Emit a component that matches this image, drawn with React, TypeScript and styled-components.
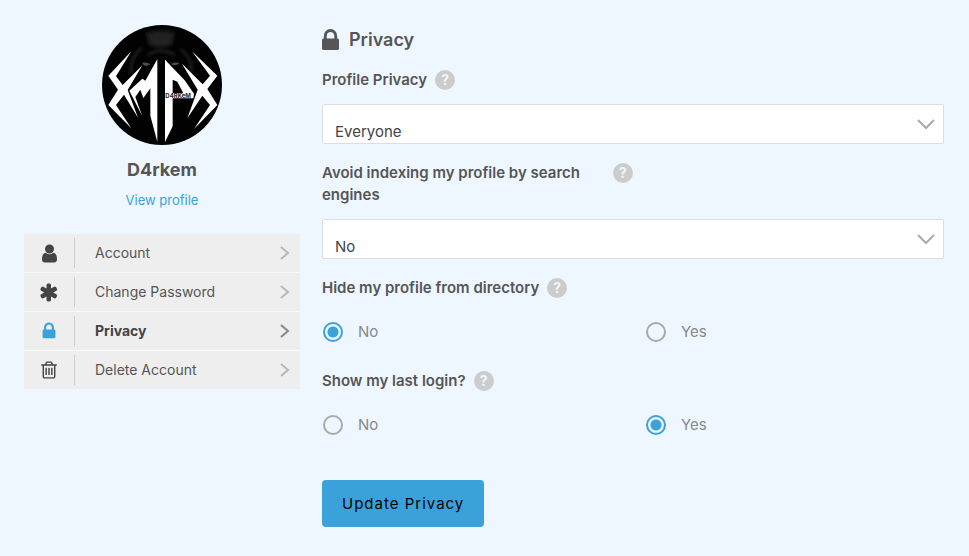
import React, { useState } from 'react';
import styled, { createGlobalStyle } from 'styled-components';

const GlobalStyle = createGlobalStyle`
  *, *::before, *::after { box-sizing: border-box; }
  body {
    margin: 0;
    background: #eef7ff;
    color: #555;
    font-family: Inter, "Liberation Sans", sans-serif;
    font-size: 15px;
    line-height: 22px;
  }
`;

const Page = styled.main`
  display: grid;
  grid-template-columns: 3fr 7fr;
  padding: 25px 25px 29px 24px;
`;

const Sidebar = styled.aside`
  display: flex;
  flex-direction: column;
`;

const ProfileCard = styled.div`
  display: flex;
  flex-direction: column;
  align-items: center;
  margin-bottom: 23px;
`;

const Avatar = styled.svg`
  width: 120px;
  height: 120px;
  border-radius: 50%;
`;

const UserName = styled.div`
  margin-top: 13px;
  font-size: 18px;
  line-height: 24px;
  font-weight: 700;
`;

const ProfileLink = styled.a`
  margin-top: 8px;
  font-size: 13px;
  line-height: 21px;
  color: #3ba1da;
  text-decoration: none;
`;

const Menu = styled.nav`
  display: flex;
  flex-direction: column;
  gap: 1px;
  background: #f4fafd;
`;

const MenuItem = styled.a<{ $active?: boolean }>`
  display: flex;
  align-items: center;
  height: 38px;
  padding-right: 10px;
  background: #eee;
  color: ${(p) => (p.$active ? '#444' : '#555')};
  font-size: 14px;
  font-weight: ${(p) => (p.$active ? 700 : 400)};
  text-decoration: none;
`;

const MenuIcon = styled.span<{ $active?: boolean }>`
  display: flex;
  align-items: center;
  justify-content: center;
  width: 51px;
  height: 30px;
  border-right: 1px solid #ccc;
  color: ${(p) => (p.$active ? '#3ba1da' : '#444')};
`;

const MenuText = styled.span`
  flex: 1;
  padding-left: 20px;
`;

const Arrow = styled.svg<{ $active?: boolean }>`
  width: 10px;
  height: 16px;
  fill: none;
  stroke: ${(p) => (p.$active ? '#888' : '#b8b8b8')};
  stroke-width: 2;
`;

const Glyph = styled.svg<{ $size: number }>`
  display: block;
  width: ${(p) => p.$size}px;
  height: ${(p) => p.$size}px;
  fill: currentColor;
`;

const Form = styled.form`
  display: flex;
  flex-direction: column;
  align-items: stretch;
  gap: 18px;
  padding: 3px 0 0 22px;
`;

const Heading = styled.h1`
  display: flex;
  align-items: center;
  gap: 10px;
  margin: 0;
  height: 23px;
  font-size: 18px;
  line-height: 24px;
  font-weight: 600;
`;

const HeadingIcon = styled.svg`
  width: 17px;
  height: 21px;
  fill: currentColor;
`;

const Field = styled.div`
  display: flex;
  flex-direction: column;
  gap: 13px;
`;

const LabelRow = styled.div`
  display: flex;
  align-items: flex-start;
  gap: 8px;
`;

const Label = styled.label`
  max-width: 283px;
  font-weight: 600;
`;

const HelpButton = styled.button`
  flex: none;
  width: 20px;
  height: 20px;
  margin-top: 1px;
  padding: 0;
  border: 0;
  border-radius: 50%;
  background: #ccc;
  color: #eef7ff;
  font: 700 14px/20px Inter, sans-serif;
  text-align: center;
`;

const SelectBox = styled.div`
  display: grid;
  align-items: center;
`;

const Select = styled.select`
  grid-area: 1 / 1;
  appearance: none;
  width: 100%;
  height: 40px;
  padding: 16px 40px 0 12px;
  border: 1px solid #ddd;
  border-radius: 2px;
  background: #fff;
  color: #444;
  font: 400 15px/22px Inter, sans-serif;
`;

const SelectArrow = styled.svg`
  grid-area: 1 / 1;
  justify-self: end;
  width: 20px;
  height: 12px;
  margin-right: 8px;
  fill: none;
  stroke: #aaa;
  stroke-width: 2;
  pointer-events: none;
`;

const RadioRow = styled.div`
  display: grid;
  grid-template-columns: 1fr 1fr;
  column-gap: 24px;
  height: 40px;
  align-items: center;
`;

const Option = styled.label`
  display: flex;
  align-items: center;
  gap: 15px;
  padding-left: 1px;
  color: #888;
`;

const Radio = styled.input`
  appearance: none;
  width: 20px;
  height: 20px;
  margin: 0;
  border: 2px solid #aaa;
  border-radius: 50%;
  &:checked {
    border-color: #3ba1da;
    background: radial-gradient(circle, #3ba1da 5px, transparent 6px);
  }
`;

const Submit = styled.button`
  align-self: flex-start;
  margin-top: 17px;
  height: 47px;
  padding: 0 20px;
  border: 0;
  border-radius: 4px;
  background: #3ba1da;
  color: #000;
  font: 400 15px/20px Inter, sans-serif;
  letter-spacing: 1px;
`;

const LOCK =
  'M640 768h512v-192q0-106-75-181t-181-75-181 75-75 181v192zm832 96v576q0 40-28 68t-68 28h-960q-40 0-68-28t-28-68v-576q0-40 28-68t68-28h32v-192q0-184 132-316t316-132 316 132 132 316v192h32q40 0 68 28t28 68z';

const USER =
  'M1536 1399q0 109-62.5 187t-150.5 78h-854q-88 0-150.5-78t-62.5-187q0-85 8.5-160.5t31.5-152 58.5-131 94-89 134.5-34.5q131 128 313 128t313-128q76 0 134.5 34.5t94 89 58.5 131 31.5 152 8.5 160.5zm-256-887q0 159-112.5 271.5t-271.5 112.5-271.5-112.5-112.5-271.5 112.5-271.5 271.5-112.5 271.5 112.5 112.5 271.5z';

const ASTERISK =
  'M1482 1050q46 26 59.5 77.5t-12.5 97.5l-64 110q-26 46-77.5 59.5t-97.5-12.5l-266-153v307q0 52-38 90t-90 38h-128q-52 0-90-38t-38-90v-307l-266 153q-46 26-97.5 12.5t-77.5-59.5l-64-110q-26-46-12.5-97.5t59.5-77.5l266-154-266-154q-46-26-59.5-77.5t12.5-97.5l64-110q26-46 77.5-59.5t97.5 12.5l266 153v-307q0-52 38-90t90-38h128q52 0 90 38t38 90v307l266-153q46-26 97.5-12.5t77.5 59.5l64 110q26 46 12.5 97.5t-59.5 77.5l-266 154z';

const TRASH =
  'M704 736v576q0 14-9 23t-23 9h-64q-14 0-23-9t-9-23v-576q0-14 9-23t23-9h64q14 0 23 9t9 23zm256 0v576q0 14-9 23t-23 9h-64q-14 0-23-9t-9-23v-576q0-14 9-23t23-9h64q14 0 23 9t9 23zm256 0v576q0 14-9 23t-23 9h-64q-14 0-23-9t-9-23v-576q0-14 9-23t23-9h64q14 0 23 9t9 23zm128 724v-948h-896v948q0 22 7 40.5t14.5 27 10.5 8.5h832q3 0 10.5-8.5t14.5-27 7-40.5zm-672-1076h448l-48-117q-7-9-17-11h-317q-10 2-17 11zm928 32v64q0 14-9 23t-23 9h-96v948q0 83-47 143.5t-113 60.5h-832q-66 0-113-58.5t-47-141.5v-952h-96q-14 0-23-9t-9-23v-64q0-14 9-23t23-9h309l70-167q15-37 54-63t79-26h320q40 0 79 26t54 63l70 167h309q14 0 23 9t9 23z';

const items = [
  { text: 'Account', icon: USER, size: 21 },
  { text: 'Change Password', icon: ASTERISK, size: 21 },
  { text: 'Privacy', icon: LOCK, size: 20, active: true },
  { text: 'Delete Account', icon: TRASH, size: 20 },
];

function ProfileAvatar() {
  return (
    <Avatar viewBox="0 0 360 360" role="img" aria-label="D4rkem">
      <defs>
        <filter id="smoke" x="-20%" y="-20%" width="140%" height="140%">
          <feGaussianBlur stdDeviation="5" />
        </filter>
      </defs>
      <rect width="360" height="360" fill="#020202" />
      <g filter="url(#smoke)" fill="none" stroke="#1c1c1c" strokeWidth="9">
        <path d="M136 27q42-14 78 0l-8 30q-32 14-62 0z" fill="#202020" />
        <path d="M120 69q-38 30-32 78M236 73q38 28 30 72M136 90q40-24 82 0" />
      </g>
      <path d="M121 113q12-3 25 5-12 7-22 2zM207 117q12-7 25-3-8 9-20 6z" fill="#455548" />
      <g fill="#fff">
        <path d="M88 79L19 152 48 194 19 240 88 310 42 240 66 209 108 278 77 195 121 121 62 180 42 154z" />
        <path d="M166 102L130 167 121 161 82 197 121 274 100 216 115 194 124 219 145 190V272L166 351z" />
        <path d="M189 104L248 166 276 206 274 220H212V304L189 351zM212 164V205H244L226 170z" fillRule="evenodd" />
        <path d="M270 79L346 152 316 192 346 240 276 312 324 240 301 212 256 280 287 194 240 116 302 178 324 152z" />
      </g>
      <text x="190" y="219" fill="#222" fontFamily="Inter, sans-serif" fontSize="18" fontWeight="700">
        D4RKeM
      </text>
    </Avatar>
  );
}

function FieldLabel({ id, text }: { id: string; text: string }) {
  return (
    <LabelRow>
      <Label htmlFor={id}>{text}</Label>
      <HelpButton type="button" aria-label={`Help: ${text}`}>?</HelpButton>
    </LabelRow>
  );
}

function SelectField(props: { id: string; text: string; initial: string; options: string[] }) {
  return (
    <Field>
      <FieldLabel id={props.id} text={props.text} />
      <SelectBox>
        <Select id={props.id} defaultValue={props.initial}>
          {props.options.map((o) => (
            <option key={o}>{o}</option>
          ))}
        </Select>
        <SelectArrow viewBox="0 0 20 12" aria-hidden="true">
          <path d="M2 2l8 8 8-8" />
        </SelectArrow>
      </SelectBox>
    </Field>
  );
}

function RadioField(props: { id: string; text: string; initial: string }) {
  const [value, setValue] = useState(props.initial);
  return (
    <Field>
      <FieldLabel id={`${props.id}-${props.initial}`} text={props.text} />
      <RadioRow role="radiogroup" aria-label={props.text}>
        {['No', 'Yes'].map((o) => (
          <Option key={o}>
            <Radio
              type="radio"
              id={`${props.id}-${o}`}
              name={props.id}
              checked={value === o}
              onChange={() => setValue(o)}
            />
            {o}
          </Option>
        ))}
      </RadioRow>
    </Field>
  );
}

export default function App() {
  return (
    <>
      <GlobalStyle />
      <Page>
        <Sidebar>
          <ProfileCard>
            <ProfileAvatar />
            <UserName>D4rkem</UserName>
            <ProfileLink href="#profile">View profile</ProfileLink>
          </ProfileCard>
          <Menu aria-label="Account settings">
            {items.map((item) => (
              <MenuItem key={item.text} href="#settings" $active={item.active}>
                <MenuIcon $active={item.active}>
                  <Glyph viewBox="0 0 1792 1792" $size={item.size} aria-hidden="true">
                    <path d={item.icon} />
                  </Glyph>
                </MenuIcon>
                <MenuText>{item.text}</MenuText>
                <Arrow viewBox="0 0 10 16" $active={item.active} aria-hidden="true">
                  <path d="M1 2l7 6-7 6" />
                </Arrow>
              </MenuItem>
            ))}
          </Menu>
        </Sidebar>
        <Form onSubmit={(e) => e.preventDefault()}>
          <Heading>
            <HeadingIcon viewBox="320 128 1152 1408" aria-hidden="true">
              <path d={LOCK} />
            </HeadingIcon>
            Privacy
          </Heading>
          <SelectField
            id="profile-privacy"
            text="Profile Privacy"
            initial="Everyone"
            options={['Everyone', 'Only me']}
          />
          <SelectField
            id="search-indexing"
            text="Avoid indexing my profile by search engines"
            initial="No"
            options={['No', 'Yes']}
          />
          <RadioField id="hide-profile" text="Hide my profile from directory" initial="No" />
          <RadioField id="last-login" text="Show my last login?" initial="Yes" />
          <Submit type="submit">Update Privacy</Submit>
        </Form>
      </Page>
    </>
  );
}
